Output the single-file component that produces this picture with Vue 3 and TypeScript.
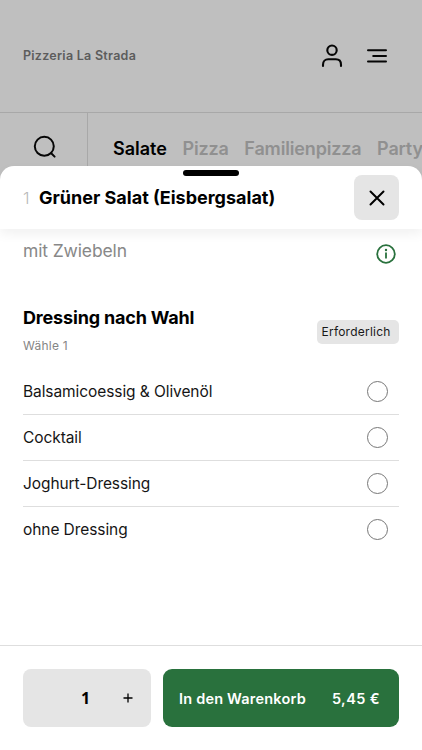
<script setup lang="ts">
import { ref } from 'vue'

interface Category { name: string; cls: string }

const categories: Category[] = [
  { name: 'Salate', cls: 'c-salate' },
  { name: 'Pizza', cls: 'c-pizza' },
  { name: 'Familienpizza', cls: 'c-family' },
  { name: 'Party', cls: 'c-party' },
]
const dressings: string[] = ['Balsamicoessig & Olivenöl', 'Cocktail', 'Joghurt-Dressing', 'ohne Dressing']
const active = ref('Salate')
const selected = ref<string | null>(null)
const quantity = ref(1)
</script>

<template>
  <div class="app">
    <div class="backdrop">
      <header class="topbar">
        <span class="brand">Pizzeria La Strada</span>
        <svg class="user" width="24" height="26" viewBox="0 0 24 26" fill="none" stroke="#060606" stroke-width="2.1" stroke-linecap="round">
          <circle cx="12" cy="7.2" r="4.700" />
          <path d="M3 22.900v-1.200c0-3.400 2.200-5.400 5.200-5.400h7.600c3 0 5.200 2 5.200 5.400v1.200" />
        </svg>
        <svg class="menu" width="22" height="16" viewBox="0 0 22 16" fill="none" stroke="#060606" stroke-width="2" stroke-linecap="round">
          <path d="M2 2.300h18M7.200 8h12.800M2 13.600h18" />
        </svg>
      </header>
      <nav class="tabs">
        <div class="search">
          <svg width="24" height="24" viewBox="0 0 24 24" fill="none" stroke="#060606" stroke-width="2" stroke-linecap="round">
            <circle cx="11.300" cy="11.300" r="9.500" />
            <path d="M18.200 18.300l3.400 3.300" />
          </svg>
        </div>
        <div class="list">
          <span v-for="c in categories" :key="c.name" class="tab" :class="[c.cls, { active: c.name === active }]" @click="active = c.name">{{ c.name }}</span>
        </div>
      </nav>
    </div>

    <section class="sheet">
      <div class="handle"></div>
      <header class="head">
        <span class="num">1</span>
        <h1>Grüner Salat (Eisbergsalat)</h1>
        <button class="close" aria-label="Schließen">
          <svg width="18" height="18" viewBox="0 0 18 18" fill="none" stroke="#000" stroke-width="2" stroke-linecap="round">
            <path d="M2.500 2.500l13 13M15.500 2.500l-13 13" />
          </svg>
        </button>
      </header>
      <div class="content">
        <div class="desc">
          <span class="desc-text">mit Zwiebeln</span>
          <svg class="info" width="20" height="20" viewBox="0 0 20 20" fill="none" stroke="#29713d" stroke-width="1.800">
            <circle cx="10" cy="10" r="8.800" />
            <path d="M10 8.500v5.900" />
            <circle cx="10" cy="6" r="1.200" fill="#29713d" stroke="none" />
          </svg>
        </div>
        <div class="group">
          <div class="titles">
            <h2>Dressing nach Wahl</h2>
            <p>Wähle 1</p>
          </div>
          <span class="badge">Erforderlich</span>
        </div>
        <ul class="options">
          <li v-for="d in dressings" :key="d" @click="selected = d">
            <span>{{ d }}</span>
            <i class="radio" :class="{ on: selected === d }"></i>
          </li>
        </ul>
      </div>
      <footer class="foot">
        <div class="stepper">
          <span class="qty">{{ quantity }}</span>
          <button class="plus" aria-label="Mehr" @click="quantity++">
            <svg width="10" height="10" viewBox="0 0 10 10" stroke="#000" stroke-width="1.300"><path d="M.5 5h9M5 .5v9" /></svg>
          </button>
        </div>
        <button class="cart">
          <span class="cart-label">In den Warenkorb</span>
          <span class="price">5,45 €</span>
        </button>
      </footer>
    </section>
  </div>
</template>

<style>
body { background: #bfbfbf; }
</style>

<style scoped>
.app { width: 422px; height: 750px; overflow: hidden; display: flex; flex-direction: column; background: #bfbfbf; font-family: Inter, "Liberation Sans", sans-serif; color: #000; white-space: nowrap; }
.app * { box-sizing: border-box; }
button { border: 0; padding: 0; font: inherit; color: inherit; }
h1, h2, p, ul { margin: 0; padding: 0; }
svg { display: block; flex: none; }
.backdrop { height: 166px; flex: none; display: flex; flex-direction: column; }
.topbar { height: 113px; flex: none; border-bottom: 1px solid #a8a8a8; display: flex; align-items: center; padding: 0 34px 0 23px; }
.brand { font-size: 12.500px; font-weight: 600; color: #5c5c5c; letter-spacing: .27px; padding-bottom: 2px; }
.user { margin-left: auto; }
.menu { margin-left: 22px; }
.tabs { display: flex; flex: 1; }
.search { width: 88px; flex: none; border-right: 1px solid #a8a8a8; padding: 22px 0 0 33px; }
.list { display: flex; gap: 15.600px; padding: 25px 0 0 25px; width: 334px; overflow: hidden; }
.tab { font-size: 18px; line-height: 22px; font-weight: 600; color: #909090; flex: none; letter-spacing: -.16px; }
.tab.active { color: #000; letter-spacing: 0; }
.sheet { flex: none; height: 584px; background: #fff; border-radius: 14px 14px 0 0; display: flex; flex-direction: column; position: relative; }
.handle { position: absolute; left: 183px; top: 4px; width: 56px; height: 6px; border-radius: 3px; background: #000; }
.head { height: 63px; flex: none; display: flex; align-items: center; padding: 0 23px; border-radius: 14px 14px 0 0; box-shadow: 0 5px 12px rgba(0,0,0,.06); }
.num { width: 16px; font-size: 16.500px; color: #b9b9b9; font-weight: 300; }
h1 { font-size: 18px; font-weight: 650; line-height: 22px; letter-spacing: 0; }
.close { margin-left: auto; width: 45px; height: 45px; border-radius: 8px; background: #e5e5e5; display: flex; align-items: center; justify-content: center; }
.content { flex: 1; padding: 0 23px; }
.desc { display: flex; justify-content: space-between; padding: 11px 3px 0 0; height: 74px; }
.desc-text { font-size: 17.500px; line-height: 22px; color: #888; font-weight: 400; letter-spacing: -.13px; }
.info { margin-top: 4px; }
.group { display: flex; justify-content: space-between; height: 66px; }
h2 { font-size: 18px; line-height: 22px; font-weight: 650; margin-top: 4px; letter-spacing: -.17px; }
.group p { font-size: 12px; line-height: 16px; color: #858585; margin-top: 9px; letter-spacing: .25px; }
.badge { width: 82px; height: 24px; margin-top: 17px; padding-left: 4.500px; border-radius: 5px; background: #e5e5e5; font-size: 12px; line-height: 24px; color: #181818; letter-spacing: .23px; }
.options { list-style: none; }
.options li { height: 46px; display: flex; align-items: center; justify-content: space-between; padding-right: 11px; border-bottom: 1px solid #dedede; font-size: 15.500px; color: #151515; letter-spacing: -.08px; }
.options li:last-child { border-color: transparent; }
.radio { width: 21px; height: 21px; border: 1px solid #777; border-radius: 50%; }
.radio.on { border: 6px solid #29713d; }
.foot { height: 105px; flex: none; border-top: 1px solid #dedede; padding: 23px 23px 0; display: flex; gap: 12px; }
.stepper { width: 128px; height: 58px; border-radius: 8px; background: #e5e5e5; display: flex; align-items: center; padding: 0 18px 0 58px; justify-content: space-between; }
.qty { font: 700 16px "Noto Sans", sans-serif; padding-bottom: 1px; }
.plus { background: none; }
.cart { width: 236px; height: 58px; border-radius: 9px; background: #29713d; color: #fff; display: flex; align-items: center; justify-content: space-between; padding: 0 19px 0 16px; font-size: 14.500px; font-weight: 600; }
.cart-label { letter-spacing: .2px; }
.price { letter-spacing: .4px; }
</style>
